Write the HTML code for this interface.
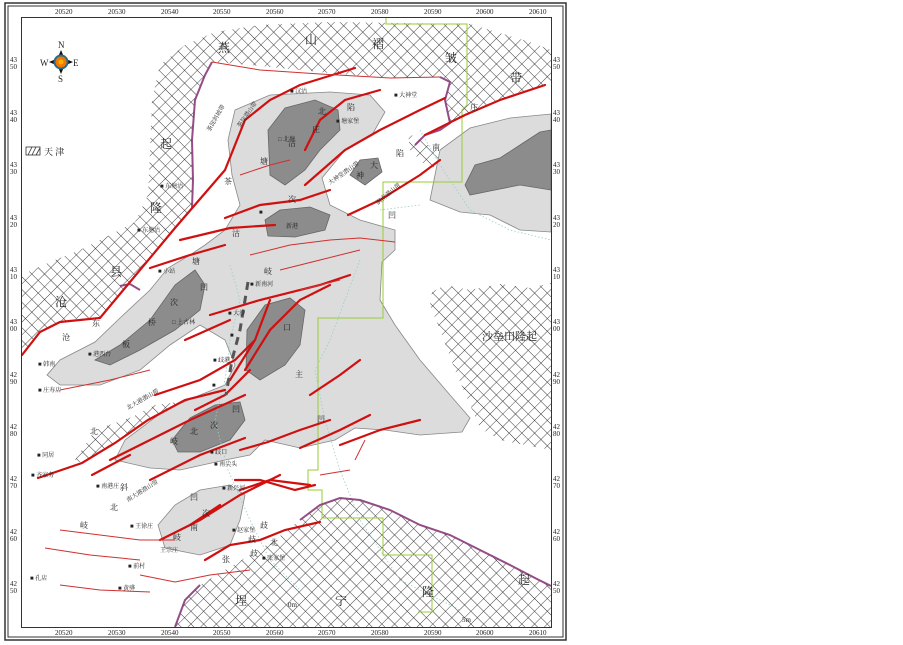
<!DOCTYPE html>
<html><head><meta charset="utf-8"><style>
html,body{margin:0;padding:0;background:#fff;width:903px;height:645px;overflow:hidden}
svg{display:block}
text{font-family:"Liberation Serif","Noto Serif CJK SC","Noto Sans CJK SC",serif;fill:#222}
.s{font-size:6px;fill:#444}
.b{font-size:12px}
.m{font-size:8px}
.t{font-size:7px;fill:#555;font-family:"Liberation Sans",sans-serif}
</style></head><body>
<svg width="903" height="645" viewBox="0 0 903 645" xmlns="http://www.w3.org/2000/svg">
<defs>
<pattern id="h" width="9" height="9" patternUnits="userSpaceOnUse" patternTransform="rotate(45)">
<path d="M0 0H9M0 0V9" stroke="#333" stroke-width="0.9" fill="none"/>
</pattern>
<clipPath id="c"><rect x="22" y="18" width="529" height="609"/></clipPath>
</defs>
<rect width="903" height="645" fill="#fff"/>
<!-- frame -->
<rect x="5" y="3" width="561" height="637" fill="none" stroke="#333" stroke-width="1.5"/>
<rect x="8" y="6" width="555" height="631" fill="none" stroke="#333" stroke-width="1"/>
<rect x="21.5" y="17.5" width="530" height="610" fill="none" stroke="#333" stroke-width="1"/>
<g clip-path="url(#c)">
<!-- hatch top/left -->
<path d="M22 275 L50 262 L80 250 L110 235 L135 222 L148 195 L150 150 L152 100 L160 65 L185 45 L215 32 L260 25 L330 22 L470 24 L500 33 L530 42 L551 50 L551 85 L520 92 L490 103 L465 115 L450 123 L445 100 L450 82 L440 77 L400 78 L350 75 L300 70 L250 65 L212 62 L205 75 L195 100 L192 140 L193 180 L192 208 L175 228 L160 245 L145 265 L130 282 L115 300 L100 318 L80 318 L60 322 L40 332 L22 355 Z" fill="url(#h)"/>
<!-- right hatch -->
<path d="M432 292 L445 285 L470 290 L500 284 L530 288 L551 283 L551 450 L500 440 L480 428 L468 400 L455 370 L440 330 L430 305 Z" fill="url(#h)"/>
<!-- bottom hatch -->
<path d="M175 627 L185 600 L200 585 L225 570 L250 555 L275 540 L300 520 L320 505 L340 498 L360 500 L390 510 L420 525 L450 535 L480 550 L510 565 L535 578 L551 586 L551 627 Z" fill="url(#h)"/>
<!-- small band -->
<path d="M75 460 L95 430 L132 417 L155 405 L178 402 L185 400 L148 420 L115 443 L82 463 Z" fill="url(#h)"/>
<path d="M408 133 L440 152 L445 165 L428 168 L410 150Z" fill="url(#h)"/>
<!-- light gray regions -->
<g fill="#dcdcdc" stroke="#888" stroke-width="0.8">
<path d="M235 110 L270 95 L330 92 L370 95 L385 112 L372 135 L345 150 L322 178 L330 205 L360 220 L395 230 L395 250 L382 262 L380 300 L395 325 L420 360 L450 395 L470 418 L462 432 L420 435 L385 430 L355 428 L335 440 L300 448 L265 440 L250 455 L225 460 L180 470 L150 468 L115 460 L125 440 L165 410 L200 395 L225 385 L235 365 L225 340 L200 325 L170 345 L140 370 L100 385 L60 385 L47 375 L60 360 L95 342 L120 318 L150 290 L168 268 L190 255 L205 245 L225 230 L240 205 L232 175 L228 140 Z"/>
<path d="M430 200 L440 150 L470 128 L510 118 L551 114 L551 232 L520 230 L490 215 L460 212 Z"/>
<path d="M158 525 L175 505 L200 490 L230 485 L245 495 L240 520 L230 545 L200 555 L165 548 Z"/>
</g>
<g fill="#8c8c8c" stroke="#666" stroke-width="0.8">
<path d="M268 130 L285 108 L315 100 L338 110 L340 130 L320 150 L305 170 L285 185 L270 175 Z"/>
<path d="M265 220 L280 210 L310 207 L330 215 L325 230 L295 237 L268 236 Z"/>
<path d="M95 360 L120 345 L150 320 L175 285 L195 270 L205 285 L200 310 L175 330 L140 350 L110 365 Z"/>
<path d="M247 330 L265 305 L290 298 L305 310 L300 345 L285 365 L260 380 L246 370 Z"/>
<path d="M172 440 L190 418 L215 405 L240 402 L245 420 L230 440 L200 452 L178 452 Z"/>
<path d="M465 185 L475 165 L500 158 L520 145 L540 132 L551 130 L551 190 L520 185 L495 190 L470 195 Z"/>
<path d="M350 175 L360 160 L378 158 L382 172 L365 185 Z"/>
</g>
<!-- green boundary -->
<path d="M386 18 V24 H467 V105 L462 110 V182 H383 V318 H318 V470 H308 V490 H322 V518 H383 V555 H432 V612 H418" fill="none" stroke="#9c3" stroke-width="1"/>
<!-- blue dotted rivers -->
<g fill="none" stroke="#9cc" stroke-width="0.8" stroke-dasharray="1.5 2">
<path d="M230 265 L240 300 L230 340 L225 380 L215 420 L228 470 L250 520 L270 560 L300 590"/>
<path d="M360 260 L345 300 L330 340 L315 370 L325 420 L340 470 L360 520 L400 580 L460 610"/>
<path d="M420 130 L440 165 L470 210 L510 230 L551 240"/>
<path d="M380 210 L420 205"/>
</g>
<!-- purple boundaries -->
<g fill="none" stroke="#844" stroke-width="2" stroke-opacity="0.9">
<path d="M212 62 L205 75 L195 100 L192 140 L193 180 L192 208" stroke="#8a3a7a"/>
<path d="M440 77 L450 82 L445 100 L450 123 L440 130 L425 135 L415 145" stroke="#8a3a7a"/>
<path d="M300 520 L320 505 L340 498 L360 500 L390 510 L420 525 L450 535 L480 550 L510 565 L535 578 L551 586" stroke="#8a3a7a"/>
<path d="M175 627 L185 600 L200 585" stroke="#8a3a7a"/>
<path d="M120 286 L130 284 L140 290" stroke="#8a3a7a"/>
</g>
<!-- red faults -->
<g fill="none" stroke="#d01010" stroke-width="2.2" stroke-linecap="round">
<path d="M22 355 L40 332 L60 322 L100 318 L130 282 L175 228 L225 170 L245 120 L270 100 L300 85 L355 68"/>
<path d="M425 135 L465 115 L500 100 L545 85"/>
<path d="M305 150 L320 120 L345 100 L380 90"/>
<path d="M305 185 L345 150 L380 130 L420 110 L445 98"/>
<path d="M348 215 L380 200 L420 175 L440 160"/>
<path d="M225 218 L260 205 L300 200 L330 190"/>
<path d="M180 240 L230 228 L275 225"/>
<path d="M150 268 L190 255 L225 245"/>
<path d="M210 315 L260 300 L320 285 L350 275"/>
<path d="M185 340 L230 320"/>
<path d="M155 395 L200 380 L235 360 L255 340"/>
<path d="M195 410 L225 395 L250 370"/>
<path d="M230 380 L255 340 L270 300"/>
<path d="M245 370 L270 330 L300 300 L330 285"/>
<path d="M38 478 L82 463 L115 443 L148 420 L185 400 L225 390"/>
<path d="M110 460 L150 440 L190 420 L245 395"/>
<path d="M150 480 L200 455 L245 438"/>
<path d="M92 475 L130 455"/>
<path d="M160 540 L200 520 L240 495 L280 475"/>
<path d="M190 525 L220 505"/>
<path d="M240 490 L270 480 L310 485"/>
<path d="M235 480 L260 480 L295 490 L315 485"/>
<path d="M205 560 L230 545 L260 540 L285 530 L320 522"/>
<path d="M240 450 L268 442 L300 430 L330 420"/>
<path d="M300 448 L340 430 L370 415"/>
<path d="M340 445 L380 430 L420 420"/>
<path d="M310 395 L340 375 L360 360"/>
</g>
<g fill="none" stroke="#d03030" stroke-width="1">
<path d="M212 62 L260 70 L320 74 L390 78 L440 77"/>
<path d="M240 175 L270 165 L290 160"/>
<path d="M250 255 L290 245 L330 240"/>
<path d="M280 270 L320 260 L360 250"/>
<path d="M300 290 L340 280"/>
<path d="M60 390 L110 380 L150 370"/>
<path d="M60 530 L100 535 L140 540 L175 540"/>
<path d="M45 548 L90 555 L140 560"/>
<path d="M60 585 L100 590 L150 592"/>
<path d="M140 575 L175 582 L210 575 L250 570"/>
<path d="M320 475 L350 470"/>
<path d="M355 460 L365 440"/>
<path d="M330 240 L360 238 L395 242"/>
</g>
<g fill="none" stroke="#555" stroke-width="3" stroke-dasharray="8 6">
<path d="M248 282 L240 330 L232 360 L226 395"/>
</g>
</g>
<!-- ticks top -->
<g class="t">
<text x="55" y="14">20520</text><text x="108" y="14">20530</text><text x="161" y="14">20540</text><text x="213" y="14">20550</text><text x="266" y="14">20560</text><text x="318" y="14">20570</text><text x="371" y="14">20580</text><text x="424" y="14">20590</text><text x="476" y="14">20600</text><text x="529" y="14">20610</text>
<text x="55" y="635">20520</text><text x="108" y="635">20530</text><text x="161" y="635">20540</text><text x="213" y="635">20550</text><text x="266" y="635">20560</text><text x="318" y="635">20570</text><text x="371" y="635">20580</text><text x="424" y="635">20590</text><text x="476" y="635">20600</text><text x="529" y="635">20610</text>
</g>
<g class="t">
<text x="10" y="62">43</text><text x="10" y="69">50</text>
<text x="10" y="115">43</text><text x="10" y="122">40</text>
<text x="10" y="167">43</text><text x="10" y="174">30</text>
<text x="10" y="220">43</text><text x="10" y="227">20</text>
<text x="10" y="272">43</text><text x="10" y="279">10</text>
<text x="10" y="324">43</text><text x="10" y="331">00</text>
<text x="10" y="377">42</text><text x="10" y="384">90</text>
<text x="10" y="429">42</text><text x="10" y="436">80</text>
<text x="10" y="481">42</text><text x="10" y="488">70</text>
<text x="10" y="534">42</text><text x="10" y="541">60</text>
<text x="10" y="586">42</text><text x="10" y="593">50</text>
<text x="553" y="62">43</text><text x="553" y="69">50</text>
<text x="553" y="115">43</text><text x="553" y="122">40</text>
<text x="553" y="167">43</text><text x="553" y="174">30</text>
<text x="553" y="220">43</text><text x="553" y="227">20</text>
<text x="553" y="272">43</text><text x="553" y="279">10</text>
<text x="553" y="324">43</text><text x="553" y="331">00</text>
<text x="553" y="377">42</text><text x="553" y="384">90</text>
<text x="553" y="429">42</text><text x="553" y="436">80</text>
<text x="553" y="481">42</text><text x="553" y="488">70</text>
<text x="553" y="534">42</text><text x="553" y="541">60</text>
<text x="553" y="586">42</text><text x="553" y="593">50</text>
</g>
<!-- compass -->
<g>
<path d="M61 50 L64 57 L61 56 L58 57Z M61 74 L64 67 L61 68 L58 67Z M49 62 L56 59 L55 62 L56 65Z M73 62 L66 59 L67 62 L66 65Z" fill="#111"/>
<circle cx="61" cy="62" r="7.5" fill="#2a6a8a"/>
<circle cx="61" cy="62" r="5.5" fill="#f07800"/>
<circle cx="61" cy="62" r="2.5" fill="#ffb000"/>
<text x="58" y="48" style="font-size:9px">N</text><text x="58" y="82" style="font-size:9px">S</text>
<text x="40" y="66" style="font-size:9px">W</text><text x="73" y="66" style="font-size:9px">E</text>
</g>
<!-- legend -->
<rect x="26" y="147" width="14" height="8" fill="none" stroke="#333" stroke-width="0.8"/>
<path d="M28 155 L32 147 M32 155 L36 147 M36 155 L40 148" stroke="#333" stroke-width="0.8"/>
<text x="44" y="155" style="font-size:9px">天 津</text>
<!-- big labels -->
<g class="b">
<text x="218" y="52">燕</text><text x="305" y="44">山</text><text x="372" y="48">褶</text><text x="445" y="62">皱</text><text x="510" y="82">带</text>
<text x="160" y="148">起</text><text x="150" y="212">隆</text><text x="110" y="276">县</text><text x="55" y="306">沧</text>
<text x="482" y="340" style="font-size:11px">沙垒田隆起</text>
<text x="235" y="605">埕</text><text x="335" y="605">宁</text><text x="422" y="596">隆</text><text x="518" y="584">起</text>
</g>
<g class="m">
<text x="260" y="164">塘</text><text x="288" y="146">沽</text><text x="224" y="184">茶</text><text x="288" y="202">次</text>
<text x="192" y="264">塘</text><text x="232" y="236">沽</text><text x="264" y="274">岐</text><text x="200" y="290">凹</text><text x="170" y="305">次</text>
<text x="148" y="325">桥</text><text x="122" y="347">板</text><text x="92" y="326">东</text><text x="62" y="340">沧</text>
<text x="283" y="330">口</text><text x="295" y="377">主</text><text x="317" y="422">凹</text>
<text x="232" y="412">凹</text><text x="210" y="428">次</text><text x="190" y="434">北</text><text x="170" y="444">岐</text>
<text x="190" y="500">凹</text><text x="202" y="516">次</text><text x="190" y="530">南</text><text x="173" y="540">岐</text>
<text x="318" y="114">北</text><text x="347" y="110">陷</text><text x="312" y="132">庄</text><text x="370" y="168">大</text><text x="356" y="178">神</text><text x="396" y="156">陷</text>
<text x="388" y="218">凹</text><text x="432" y="150">南</text><text x="470" y="110">庄</text>
<text x="90" y="434">北</text><text x="110" y="510">北</text><text x="80" y="528">岐</text><text x="120" y="490">斜</text>
<text x="260" y="528">歧</text><text x="248" y="542">歧</text><text x="270" y="545">北</text><text x="222" y="562">张</text><text x="250" y="556">歧</text>
</g>
<g class="s">
<text x="290" y="93">■ 汉沽</text><text x="394" y="97">■ 大神堂</text><text x="336" y="123">■ 塘家堡</text><text x="278" y="141">□ 北塘</text>
<text x="160" y="188">■ 东塘沽</text><text x="137" y="232">■ 东塘沽</text><text x="259" y="214">■</text><text x="286" y="228">新港</text>
<text x="158" y="273">■ 小站</text><text x="250" y="286">■ 新南河</text><text x="172" y="324">□ 上古林</text><text x="228" y="315">■ 大沙</text>
<text x="230" y="337">■</text><text x="213" y="362">■ 歧港</text><text x="212" y="387">■</text>
<text x="88" y="356">■ 港西台</text><text x="38" y="366">■ 韩南</text><text x="38" y="392">■ 庄寿店</text>
<text x="37" y="457">■ 同居</text><text x="31" y="477">■ 齐家务</text><text x="96" y="488">■ 南港庄</text><text x="130" y="528">■ 王徐庄</text>
<text x="160" y="552">王宗庄</text><text x="128" y="568">■ 前村</text><text x="118" y="590">■ 黄骅</text><text x="30" y="580">■ 孔店</text>
<text x="210" y="454">■ 歧口</text><text x="214" y="466">■ 南尖头</text><text x="222" y="490">■ 新兴河</text><text x="232" y="532">■ 赵家堡</text><text x="262" y="560">■ 张家堡</text>
<text x="210" y="132" transform="rotate(-60 210 132)">茶淀斜坡带</text>
<text x="240" y="128" transform="rotate(-55 240 128)">茶淀潜山带</text>
<text x="330" y="185" transform="rotate(-35 330 185)">大神堂潜山带</text>
<text x="378" y="205" transform="rotate(-40 378 205)">涧南潜山带</text>
<text x="128" y="410" transform="rotate(-30 128 410)">北大港潜山带</text>
<text x="128" y="502" transform="rotate(-32 128 502)">南大港潜山带</text>
<text x="288" y="607" style="font-size:7px">0m</text><text x="462" y="622" style="font-size:7px">5m</text>
</g>
</svg>
</body></html>
